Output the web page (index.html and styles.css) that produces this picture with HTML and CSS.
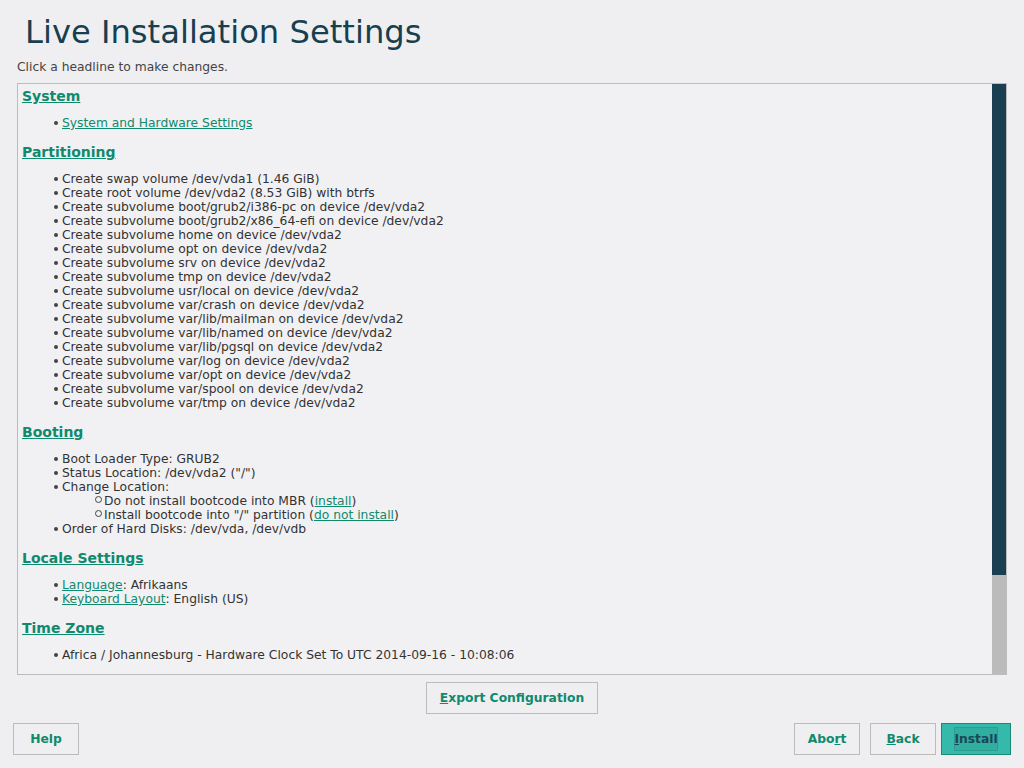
FILE: index.html
```html
<!DOCTYPE html>
<html lang="en">
<head>
<meta charset="utf-8">
<title>Live Installation Settings</title>
<link rel="stylesheet" href="styles.css">
</head>
<body>
<div class="page">
  <h1 class="title">Live Installation Settings</h1>
  <p class="hint">Click a headline to make changes.</p>
  <div class="panel">
    <div class="content">
      <h3><a href="#">System</a></h3>
      <ul>
        <li><a href="#">System and Hardware Settings</a></li>
      </ul>
      <h3><a href="#">Partitioning</a></h3>
      <ul>
        <li>Create swap volume /dev/vda1 (1.46 GiB)</li>
        <li>Create root volume /dev/vda2 (8.53 GiB) with btrfs</li>
        <li>Create subvolume boot/grub2/i386-pc on device /dev/vda2</li>
        <li>Create subvolume boot/grub2/x86_64-efi on device /dev/vda2</li>
        <li>Create subvolume home on device /dev/vda2</li>
        <li>Create subvolume opt on device /dev/vda2</li>
        <li>Create subvolume srv on device /dev/vda2</li>
        <li>Create subvolume tmp on device /dev/vda2</li>
        <li>Create subvolume usr/local on device /dev/vda2</li>
        <li>Create subvolume var/crash on device /dev/vda2</li>
        <li>Create subvolume var/lib/mailman on device /dev/vda2</li>
        <li>Create subvolume var/lib/named on device /dev/vda2</li>
        <li>Create subvolume var/lib/pgsql on device /dev/vda2</li>
        <li>Create subvolume var/log on device /dev/vda2</li>
        <li>Create subvolume var/opt on device /dev/vda2</li>
        <li>Create subvolume var/spool on device /dev/vda2</li>
        <li>Create subvolume var/tmp on device /dev/vda2</li>
      </ul>
      <h3><a href="#">Booting</a></h3>
      <ul>
        <li>Boot Loader Type: GRUB2</li>
        <li>Status Location: /dev/vda2 ("/")</li>
        <li>Change Location:
          <ul class="sub">
            <li>Do not install bootcode into MBR (<a href="#">install</a>)</li>
            <li>Install bootcode into "/" partition (<a href="#">do not install</a>)</li>
          </ul>
        </li>
        <li>Order of Hard Disks: /dev/vda, /dev/vdb</li>
      </ul>
      <h3><a href="#">Locale Settings</a></h3>
      <ul>
        <li><a href="#">Language</a>: Afrikaans</li>
        <li><a href="#">Keyboard Layout</a>: English (US)</li>
      </ul>
      <h3><a href="#">Time Zone</a></h3>
      <ul>
        <li>Africa / Johannesburg - Hardware Clock Set To UTC 2014-09-16 - 10:08:06</li>
      </ul>
    </div>
    <div class="scrollbar"><div class="thumb"></div></div>
  </div>
  <div class="export-row">
    <button class="btn export"><u>E</u>xport Configuration</button>
  </div>
  <div class="footer">
    <button class="btn help">Help</button>
    <div class="actions">
      <button class="btn abort">Abo<u>r</u>t</button>
      <button class="btn back"><u>B</u>ack</button>
      <button class="btn install"><span class="focus"><u>I</u>nstall</span></button>
    </div>
  </div>
</div>
</body>
</html>
```
FILE: styles.css
```css
* { box-sizing: border-box; }
html, body {
  margin: 0;
  padding: 0;
  background: #efeff1;
}
body {
  font-family: "DejaVu Sans", sans-serif;
  font-size: 12.3px;
  color: #333333;
}
.page {
  width: 1024px;
  height: 768px;
  display: flex;
  flex-direction: column;
  padding: 13px 17px 0 17px;
}
.title {
  margin: 0 0 9px 8px;
  font-size: 32.2px;
  line-height: 38px;
  font-weight: normal;
  color: #173f4f;
}
.hint {
  margin: 0 0 9px 0;
  line-height: 14px;
  color: #444444;
}
.panel {
  height: 592px;
  border: 1px solid #bcbcbc;
  background: #f1f1f3;
  display: flex;
  overflow: hidden;
}
.content {
  flex: 1;
  overflow: hidden;
  padding: 4px 0 0 4px;
}
.scrollbar {
  width: 14px;
  background: #bbbbbb;
  display: flex;
  flex-direction: column;
}
.thumb {
  height: 491px;
  background: #1a3f50;
}
a {
  color: #0f8a6d;
  text-decoration: underline;
}
h3 {
  margin: 0;
  font-size: 14px;
  line-height: 16px;
  font-weight: bold;
}
ul {
  list-style: none;
  margin: 12px 0 14px 32px;
  padding: 0;
}
li {
  line-height: 14px;
}
li::before {
  content: "";
  display: inline-block;
  width: 4px;
  height: 4px;
  border-radius: 50%;
  background: #444;
  margin-right: 4px;
  vertical-align: 2px;
}
ul.sub {
  margin: 0 0 0 41px;
}
ul.sub li::before {
  width: 5px;
  height: 5px;
  background: transparent;
  border: 1px solid #444;
  margin-right: 2px;
  vertical-align: 2px;
}
.export-row {
  display: flex;
  justify-content: center;
  margin-top: 7px;
}
.btn {
  font-family: "DejaVu Sans", sans-serif;
  font-size: 12.3px;
  font-weight: bold;
  color: #0f8a6d;
  background: transparent;
  border: 1px solid #bbbbbb;
  height: 32px;
  padding: 0;
  cursor: pointer;
}
.btn u { text-decoration: underline; }
.export { width: 172px; }
.footer {
  display: flex;
  justify-content: space-between;
  margin: 9px -4px 0 -4px;
}
.help { width: 66px; }
.actions {
  display: flex;
}
.abort { width: 66px; margin-right: 10px; }
.back { width: 66px; margin-right: 5px; }
.install {
  width: 70px;
  background: #35b9ab;
  border-color: #1a8a75;
  color: #1a4657;
  display: flex;
  align-items: center;
  justify-content: center;
}
.install .focus {
  display: flex;
  align-items: center;
  justify-content: center;
  width: 44px;
  height: 24px;
  background: #30ae9f;
  border: 1px solid #2b9d90;
  border-radius: 1px;
}
```
